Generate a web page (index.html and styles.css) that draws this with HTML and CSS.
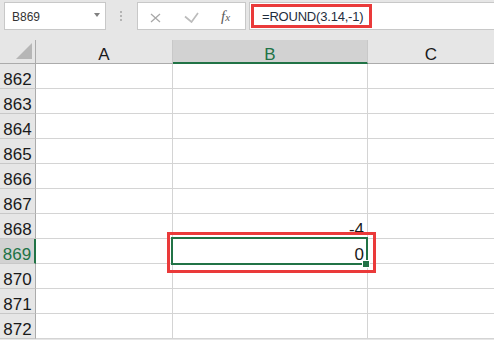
FILE: index.html
```html
<!DOCTYPE html>
<html>
<head>
<meta charset="utf-8">
<link rel="stylesheet" href="styles.css">
</head>
<body>
<div class="toolbar">
  <div class="namebox"><span class="name">B869</span><span class="caret"></span></div>
  <div class="grip"><i></i><i></i><i></i></div>
  <div class="fbuttons">
    <svg class="ic-x" width="11" height="10" viewBox="0 0 11 10"><path d="M1 1 L10 9 M10 1 L1 9" stroke="#a8a8a8" stroke-width="1.3" fill="none"/></svg>
    <svg class="ic-ok" width="15" height="11" viewBox="0 0 15 11"><path d="M1 4.5 L7.5 10 L14 1" stroke="#bcbcbc" stroke-width="1.7" fill="none"/></svg>
    <span class="fx">f<span class="fxx">x</span></span>
  </div>
  <div class="formula"><span class="fhl">=ROUND(3.14,-1)</span></div>
</div>
<div class="sheet">
  <div class="grid">
    <div class="corner"><span class="tri"></span></div>
    <div class="ch">A</div>
    <div class="ch selh">B</div>
    <div class="ch">C</div>

    <div class="rh">862</div><div class="c"></div><div class="c"></div><div class="c"></div>
    <div class="rh">863</div><div class="c"></div><div class="c"></div><div class="c"></div>
    <div class="rh">864</div><div class="c"></div><div class="c"></div><div class="c"></div>
    <div class="rh">865</div><div class="c"></div><div class="c"></div><div class="c"></div>
    <div class="rh">866</div><div class="c"></div><div class="c"></div><div class="c"></div>
    <div class="rh">867</div><div class="c"></div><div class="c"></div><div class="c"></div>
    <div class="rh">868</div><div class="c"></div><div class="c num">-4</div><div class="c"></div>
    <div class="rh selr">869</div><div class="c"></div><div class="c num">0</div><div class="c"></div>
    <div class="rh">870</div><div class="c"></div><div class="c"></div><div class="c"></div>
    <div class="rh">871</div><div class="c"></div><div class="c"></div><div class="c"></div>
    <div class="rh">872</div><div class="c"></div><div class="c"></div><div class="c"></div>
  </div>
  <div class="sel"></div>
  <div class="handle"></div>
  <div class="mark"></div>
</div>
</body>
</html>
```

FILE: styles.css
```css
html, body {
  margin: 0;
  padding: 0;
}
body {
  width: 494px;
  height: 340px;
  overflow: hidden;
  background: #e6e6e6;
  font-family: "Liberation Sans", Arial, sans-serif;
  color: #1a1a1a;
}
.toolbar {
  height: 40px;
  box-sizing: border-box;
  padding-top: 2px;
  display: flex;
  align-items: flex-start;
}
.namebox {
  margin-left: 4px;
  width: 102px;
  height: 28px;
  box-sizing: border-box;
  border: 1px solid #c8c8c8;
  background: #fff;
  display: flex;
  align-items: flex-start;
}
.name {
  padding-left: 7px;
  padding-top: 7px;
  font-size: 12px;
  line-height: 14px;
  color: #333;
}
.caret {
  margin-left: auto;
  margin-right: 5px;
  margin-top: 10px;
  width: 0;
  height: 0;
  border-left: 3.5px solid transparent;
  border-right: 3.5px solid transparent;
  border-top: 4px solid #808080;
}
.grip {
  margin-left: 14px;
  margin-top: 9px;
  display: flex;
  flex-direction: column;
  gap: 2px;
}
.grip i {
  display: block;
  width: 2px;
  height: 2px;
  background: #b4b4b4;
}
.fbuttons {
  margin-left: 15px;
  width: 109px;
  height: 28px;
  box-sizing: border-box;
  border: 1px solid #c8c8c8;
  background: #fff;
  display: flex;
  align-items: flex-start;
}
.ic-x {
  margin-left: 12px;
  margin-top: 10px;
}
.ic-ok {
  margin-left: 23px;
  margin-top: 9px;
}
.fx {
  margin-left: 22px;
  margin-top: 5px;
  font-family: "Liberation Serif", "Times New Roman", serif;
  font-style: italic;
  font-size: 15px;
  line-height: 16px;
  color: #5a5a5a;
}
.fxx {
  font-size: 11px;
}
.formula {
  margin-left: 3px;
  flex: 1;
  margin-right: -2px;
  height: 28px;
  box-sizing: border-box;
  border: 1px solid #c8c8c8;
  background: #fff;
  display: flex;
  align-items: flex-start;
}
.fhl {
  margin-left: 1px;
  margin-top: 1px;
  width: 121px;
  height: 24px;
  box-sizing: border-box;
  border: 3px solid #ea3a3a;
  padding-left: 8px;
  padding-top: 1px;
  font-size: 13px;
  line-height: 17px;
  letter-spacing: -0.2px;
  color: #1f2d3d;
  white-space: nowrap;
}
.sheet {
  position: relative;
}
.grid {
  display: grid;
  grid-template-columns: 36px 137px 195px 127px;
  grid-template-rows: 24px;
  grid-auto-rows: 25px;
  font-size: 17px;
  line-height: 17px;
}
.grid > div {
  box-sizing: border-box;
}
.corner {
  background: #e6e6e6;
  border-right: 1px solid #ababab;
  border-bottom: 1px solid #ababab;
  position: relative;
}
.tri {
  position: absolute;
  left: 16px;
  top: 3px;
  width: 0;
  height: 0;
  border-left: 16px solid transparent;
  border-bottom: 16px solid #b6b6b6;
}
.ch {
  background: #e6e6e6;
  border-right: 1px solid #c8c8c8;
  border-bottom: 1px solid #ababab;
  text-align: center;
  padding-top: 6px;
}
.ch.selh {
  background: #d2d2d2;
  color: #217346;
  border-bottom: 2px solid #217346;
}
.rh {
  background: #e6e6e6;
  border-right: 1px solid #ababab;
  border-bottom: 1px solid #c8c8c8;
  text-align: center;
  padding-top: 7px;
}
.rh.selr {
  background: #d2d2d2;
  color: #217346;
  border-right: 2px solid #217346;
}
.c {
  background: #fff;
  border-right: 1px solid #d4d4d4;
  border-bottom: 1px solid #d4d4d4;
  padding-top: 7px;
}
.c.num {
  text-align: right;
  padding-right: 3px;
}
.sel {
  position: absolute;
  left: 171px;
  top: 197px;
  width: 197px;
  height: 28px;
  box-sizing: border-box;
  border: 2px solid #217346;
}
.handle {
  position: absolute;
  left: 362px;
  top: 220px;
  width: 8px;
  height: 8px;
  box-sizing: border-box;
  border: 1px solid #fff;
  background: #217346;
}
.mark {
  position: absolute;
  left: 167px;
  top: 192px;
  width: 209px;
  height: 41px;
  box-sizing: border-box;
  border: 3px solid #ea3a3a;
}
```
